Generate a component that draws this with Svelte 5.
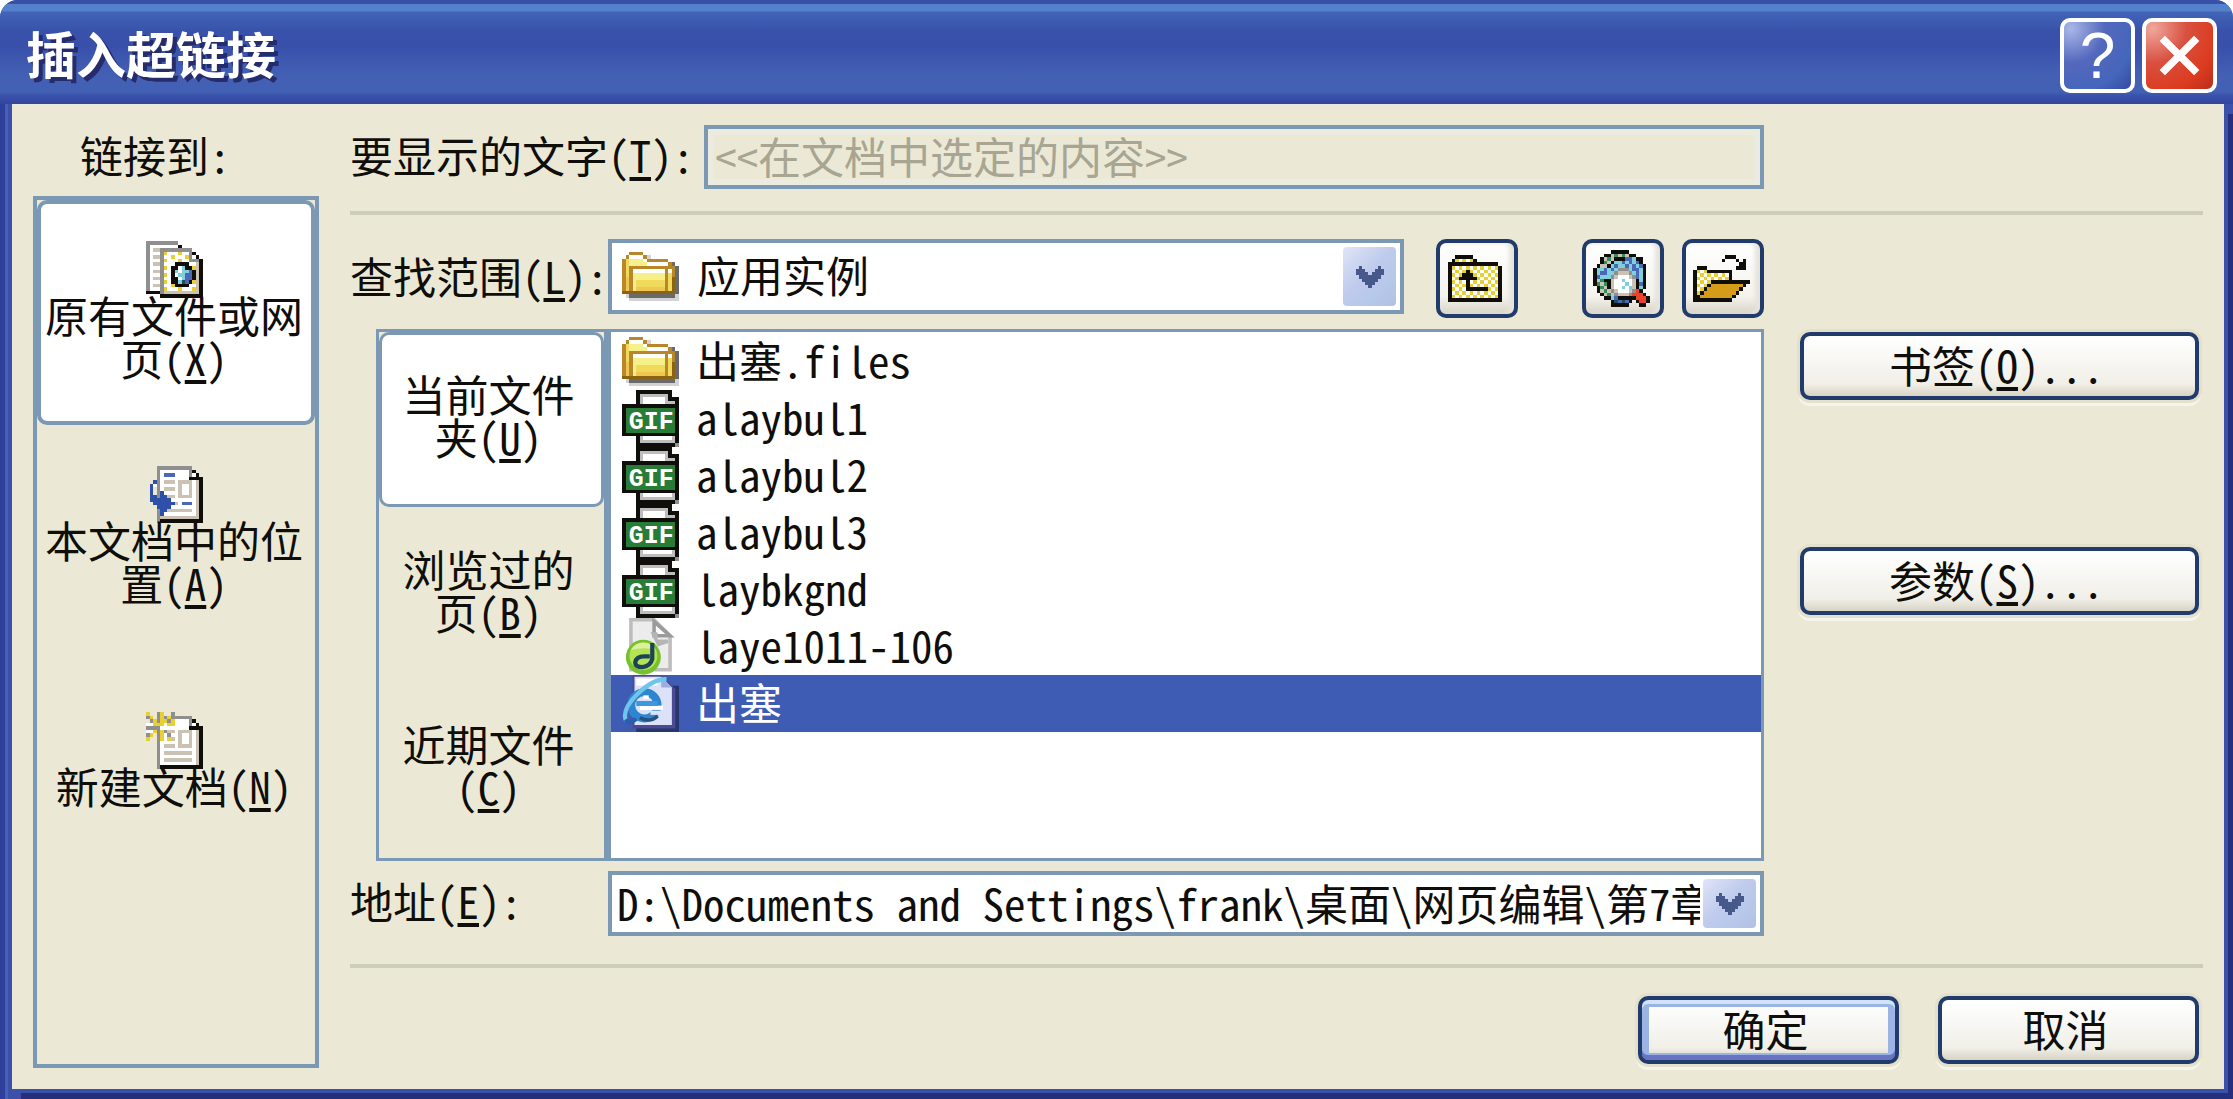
<script lang="ts">
	type Sprite = { rows: string[]; width: number; height: number };

	const palette: Record<string, string> = {
		K: '#0f0e0a',
		G: '#8f8f8f',
		S: '#bdbdbd',
		W: '#ffffff',
		T: '#cbc2b4',
		Y: '#e8cf32',
		O: '#d49c18',
		B: '#4a68b8',
		N: '#2f50a8',
		C: '#7fd0dc',
		D: '#1f4e5a',
		E: '#277d38',
		F: '#2f8f60',
		R: '#ee3f2a',
		A: '#b8872a',
		a: '#8a6410',
		p: '#f6f08a',
		q: '#f1d95c',
		r: '#f0c653',
		s: '#6a6a6a',
		t: '#d3d3d3'
	};

	function sprite(text: string): Sprite {
		const rows = text.trim().split(/\s+/);
		return { rows, width: rows[0].length, height: rows.length };
	}

	const existingIcon = sprite(`
		GGGGGGGGG.......
		GWWWWWWWWK......
		GWTTGGGGGGGGG...
		GWWWGYWWWYWWGK..
		GWTTGWWYWWWYGWK.
		GWWWGYWWWYWWGGGK
		GWTTGWWWKKKKWWTK
		GWWWGYWKKWCKKYTK
		GWTTGWWKCWCCBKTK
		GWWWGYWKWCCBBKTK
		GWTTGWWKKWCBBKTK
		GWWWGYWKKCDBKYTK
		GWTTGWWYKKKKWWTK
		GWWWGYWWWYWWWYTK
		KKKKGTTTTTTTTTTK
		....KKKKKKKKKKKK`);

	const placeIcon = sprite(`
		...GGGGGGGGGG...
		...GWWWWWWWWGK..
		...GWBBBWWWWGWK.
		...GWWWWWWWWKKKK
		..NGWTTTWTTTTWTK
		.NWGWWWWWTWWTWTK
		.N.GWTTTWTWWTWTK
		.N.GNWWWWTWWTWTK
		.NNGNNTTWTTTTWTK
		.NNNNNNWWWWWWWTK
		..NNNNNNTWBBBWTK
		...NNNNWWWWWWWTK
		...GNNTTTTTTTWTK
		...GNWWWWWWWWWTK
		...GTTTTTTTTTTTK
		...GKKKKKKKKKKKK`);

	const newIcon = sprite(`
		Y..GY..G........
		GY.GYGYGGGGGG...
		.GYGYYGYWWWWGK..
		WWYYYWYYWWWWGWK.
		GGGGWWWWWWWWKKKK
		WWYGYGTTWTTTTWTK
		GY.GYWGWWTWWTWTK
		Y..GYWYTWTWWTWTK
		...GWWWWWTWWTWTK
		...GWTTTWTTTTWTK
		...GWWWWWWWWWWTK
		...GWTTTTTTTTWTK
		...GWWWWWWWWWWTK
		...GWTTTTTTTTWTK
		...GWWWWWWWWWWTK
		...GKKKKKKKKKKKK`);

	const upIcon = sprite(`
		..KKKKK........
		.KYWYWYK.......
		KKKKKKKKKKKKKK.
		KYWYWYWYWYWYWYK
		KWYWYKYWYWYWYWK
		KYWYKKKYWYWYWYK
		KWYKKKKKYWYWYWK
		KYWYWKWYWYWYWYK
		KWYWYKYWYWYWYWK
		KYWYWKKKKKKYWYK
		KWYWYWYWYWYWYWK
		KYWYWYWYWYWYWYK
		KKKKKKKKKKKKKKK`);

	const webIcon = sprite(`
		.....KKKKK......
		...KKTFTFTKK....
		..KTFTKKKBBCKK..
		..KFTKCCBCBCBK..
		.KTTKCBCCBCBCBK.
		KCCBCBCGGGCBBCK.
		KCBBCCGTTTGCBCK.
		KBCCCGTWWWTGBCK.
		KTFKKTWWCWWTKCK.
		KFTFKTWWWCWTKBK.
		.KFTKTWWCWCTKCK.
		.KTFTGTWWWTGRK..
		..KTFTGTTTGRRRK.
		...KKCBKKKKKRRRK
		.....KDBDBK.KRRK
		.....KKKKK...KK.`);

	const openIcon = sprite(`
		.........KKK....
		........K...K.K.
		.............KK.
		.KKK........KKK.
		KYWYKKKKKKK.....
		KWYWYWYWYWK.....
		KYWYWYWYWYK.....
		KWYWYKKKKKKKKKKK
		KYWYKOOOOOOOOOK.
		KWYKOOOOOOOOOK..
		KYKOOOOOOOOOK...
		KKOOOOOOOOOK....
		KKKKKKKKKKK.....`);

	const folderIcon = sprite(`
		................
		..AAAA..........
		.AWWWWAt........
		AqppppWAAAAAA...
		AqpppppWWWWWWAs.
		AqAAAAAAAAAAAAAs
		AqAWWWWWWWWWAWAs
		AqApppppppppAqAs
		ArApppppppppAqas
		ArApqqqqqqqqAqas
		ArApqqqqqqqqAqas
		ArAprrrrrrrrAqas
		aaaaaaaaaaaaaaas
		.tssssssssssssst
		..tttttttttttttt
		................`);

	const gifIcon = sprite(`
		....KKKKKKKKKK..
		....KSSSSSSSSK..
		....KSWWWWWWSKKK
		....KSWWWWWWSSSK
		KKKKKKKKKKKKKKKK
		KEEEEEEEEEEEEEEK
		KEEEEEEEEEEEEEEK
		KEEEEEEEEEEEEEEK
		KEEEEEEEEEEEEEEK
		KEEEEEEEEEEEEEEK
		KEEEEEEEEEEEEEEK
		KEEEEEEEEEEEEEEK
		KKKKKKKKKKKKKKKK
		....KSWWWWWWWWSK
		....KSSSSSSSSSSK
		....KKKKKKKKKKKG`);

	const targets = [
		{ id: 'existing', lines: ['原有文件或网', '页'], key: 'X', icon: existingIcon },
		{ id: 'place', lines: ['本文档中的位', '置'], key: 'A', icon: placeIcon },
		{ id: 'new', lines: ['新建文档'], key: 'N', icon: newIcon }
	];

	const views = [
		{ id: 'current', lines: ['当前文件', '夹'], key: 'U' },
		{ id: 'browsed', lines: ['浏览过的', '页'], key: 'B' },
		{ id: 'recent', lines: ['近期文件', ''], key: 'C' }
	];

	const files = [
		{ name: '出塞.files', kind: 'folder' },
		{ name: 'alaybul1', kind: 'gif' },
		{ name: 'alaybul2', kind: 'gif' },
		{ name: 'alaybul3', kind: 'gif' },
		{ name: 'laybkgnd', kind: 'gif' },
		{ name: 'laye1011-106', kind: 'music' },
		{ name: '出塞', kind: 'html' }
	];

	let target = $state('existing');
	let view = $state('current');
	let selected = $state(6);
	let address = $state('D:\\Documents and Settings\\frank\\桌面\\网页编辑\\第7章');
</script>

{#snippet pixels(icon: Sprite)}
	{#each icon.rows as row, y}
		{#each row as cell, x}
			{#if cell !== '.'}
				<rect {x} {y} width="1" height="1" fill={palette[cell]} />
			{/if}
		{/each}
	{/each}
{/snippet}

{#snippet picture(icon: Sprite, size: string)}
	<svg
		class="icon {size}"
		viewBox="0 0 {icon.width} {icon.height}"
		shape-rendering="crispEdges"
		aria-hidden="true"
	>
		{@render pixels(icon)}
	</svg>
{/snippet}

{#snippet accessKey(key: string)}(<u>{key}</u>){/snippet}

{#snippet chevron()}
	<svg class="chevron" viewBox="0 0 9 7" shape-rendering="crispEdges" aria-hidden="true">
		<path d="M0 1h1V0h1v1h1v1h1v1h1V2h1V1h1V0h1v1h1v2H8v1H7v1H6v1H5v1H4V6H3V5H2V4H1V3H0z" fill="#47598a" />
	</svg>
{/snippet}

{#snippet fileIcon(kind: string)}
	{#if kind === 'folder'}
		{@render picture(folderIcon, 'square')}
	{:else if kind === 'gif'}
		<svg class="icon square" viewBox="0 0 16 16" aria-hidden="true">
			<g shape-rendering="crispEdges">{@render pixels(gifIcon)}</g>
			<text class="gif" x="8.2" y="11" text-anchor="middle">GIF</text>
		</svg>
	{:else if kind === 'music'}
		<svg class="icon square" viewBox="0 0 16 16" aria-hidden="true">
			<path d="M2.500 .5H9l4.500 4.500V14.500H2.500z" fill="#ececec" stroke="#bdbdbd" />
			<path d="M9 1v4h4.500z" fill="#fff" stroke="#9b9b9b" />
			<path d="M8 4h2v2h3v1l-3 1z" fill="#b5b5b5" />
			<circle cx="6" cy="11" r="4.900" fill="#76c12c" />
			<circle cx="6" cy="10.700" r="3.900" fill="#b4e455" />
			<path d="M2.500 9a4 4 0 0 1 7 0q-3-1-7 0z" fill="#dcf0a0" />
			<path d="M8.500 7v4.500q-.5 2-2.800 2.300q-2 0-2-1.300q.3-1.700 2.500-1.700h1.600" fill="none" stroke="#1d4456" stroke-width="1.200" />
		</svg>
	{:else}
		<svg class="icon square" viewBox="0 0 16 16" aria-hidden="true">
			<path d="M4 3h12v13H4z" fill="#27376e" />
			<path d="M3 0h8l4 4v11H3z" fill="#4c4a92" />
			<path d="M3.500 .5H11L14 3.500V14H3.500z" fill="#dbe1f6" />
			<path d="M4 1h6v2H4z" fill="#fff" />
			<path d="M11 .5v3h3z" fill="#9dadde" />
			<circle cx="6.300" cy="8.500" r="3.700" fill="none" stroke="#2f86d0" stroke-width="2.200" />
			<path d="M5 9.200h6.500" stroke="#fff" stroke-width="1.200" />
			<path d="M4 8h6" stroke="#3d97dc" stroke-width="1.400" />
			<path d="M8 10h4v1.200H8z" fill="#dbe1f6" />
			<path d="M5 12q3 1.500 5-.5" fill="none" stroke="#245084" stroke-width="1" />
			<path d="M1.200 13q-1.500-3 3-7.500t8.300-4.300" fill="none" stroke="#6fc4ea" stroke-width="1.200" />
			<path d="M1 12.500q1 1.500 3-.2" fill="none" stroke="#2a5fae" stroke-width="1.200" />
			<path d="M6 6.200h1.500" stroke="#fff" stroke-width="1" />
		</svg>
	{/if}
{/snippet}

<div class="dialog" role="dialog" aria-labelledby="dialog-title">
	<header class="titlebar">
		<h1 id="dialog-title">插入超链接</h1>
		<button class="caption help" aria-label="帮助">?</button>
		<button class="caption close" aria-label="关闭">
			<svg viewBox="0 0 40 40" aria-hidden="true">
				<path d="M4 4l32 32M36 4L4 36" stroke="#fff" stroke-width="7" />
			</svg>
		</button>
	</header>

	<div class="body">
		<nav class="side" aria-labelledby="link-to">
			<h2 id="link-to">链接到:</h2>
			<div class="targets">
				{#each targets as item (item.id)}
					<button
						class="target"
						class:active={target === item.id}
						onclick={() => (target = item.id)}
					>
						{@render picture(item.icon, 'square')}
						{#each item.lines as line, i}
							<span>{line}{#if i === item.lines.length - 1}{@render accessKey(item.key)}{/if}</span>
						{/each}
					</button>
				{/each}
			</div>
		</nav>

		<main>
			<div class="row text-row">
				<label class="wide" for="display-text">要显示的文字{@render accessKey('T')}:</label>
				<input id="display-text" value="<<在文档中选定的内容>>" disabled />
			</div>

			<hr />

			<div class="row look-row">
				<label for="look-in">查找范围{@render accessKey('L')}:</label>
				<div class="combo look">
					{@render picture(folderIcon, 'square')}
					<select id="look-in">
						<option>应用实例</option>
					</select>
					<span class="drop">{@render chevron()}</span>
				</div>
				<button class="tool up" aria-label="上一级文件夹">{@render picture(upIcon, 'tool-icon')}</button>
				<button class="tool web" aria-label="浏览 Web">{@render picture(webIcon, 'square')}</button>
				<button class="tool" aria-label="浏览文件">{@render picture(openIcon, 'tool-open')}</button>
			</div>

			<div class="browser">
				<div class="views">
					{#each views as item (item.id)}
						<button class="view" class:active={view === item.id} onclick={() => (view = item.id)}>
							<span>{item.lines[0]}</span>
							<span>{item.lines[1]}{@render accessKey(item.key)}</span>
						</button>
					{/each}
				</div>
				<ul class="files" role="listbox" aria-label="文件">
					{#each files as file, i}
						<li role="option" aria-selected={selected === i}>
							<button class="file" onclick={() => (selected = i)}>
								{@render fileIcon(file.kind)}
								<span>{file.name}</span>
							</button>
						</li>
					{/each}
				</ul>
				<div class="actions">
					<button class="push">书签{@render accessKey('O')}...</button>
					<button class="push">参数{@render accessKey('S')}...</button>
				</div>
			</div>

			<div class="row address-row">
				<label for="address">地址{@render accessKey('E')}:</label>
				<div class="combo">
					<input id="address" bind:value={address} />
					<button class="drop" aria-label="展开地址列表">{@render chevron()}</button>
				</div>
			</div>

			<hr class="lower" />

			<footer>
				<button class="push default">确定</button>
				<button class="push">取消</button>
			</footer>
		</main>
	</div>
</div>

<style>
	:global(body) {
		margin: 0;
		background: #fff;
	}

	.dialog {
		--edge: #7b98b5;
		--face: #ebe9d5;
		--ink: #0f0e0a;
		--navy: #213b6c;
		--aside: 439px;
		box-sizing: border-box;
		min-height: 100vh;
		display: flex;
		flex-direction: column;
		border-radius: 18px 18px 0 0;
		overflow: hidden;
		background: linear-gradient(90deg, #2f409c 0 5px, #4860b8 5px 8px, #3a50a9 8px);
		color: var(--ink);
		font-family: 'Noto Sans Mono CJK SC', 'Noto Sans CJK SC', 'Liberation Mono', monospace;
		font-size: 43px;
		line-height: 43px;
	}

	.dialog * {
		box-sizing: border-box;
	}

	button,
	input,
	select {
		margin: 0;
		padding: 0;
		border: 0;
		background: none;
		color: inherit;
		font: inherit;
		border-radius: 0;
		outline: 0;
	}

	u {
		text-decoration-thickness: 4px;
		text-underline-offset: 4px;
	}

	.icon {
		display: block;
		flex: none;
	}

	.square {
		width: 57px;
		height: 57px;
	}

	.titlebar {
		display: flex;
		align-items: center;
		gap: 7px;
		height: 104px;
		padding: 7px 16px 0 26px;
		background: linear-gradient(
			#3950a8 0 4px,
			#5580cb 4px 11px,
			#4264b8 12px,
			#3851aa 32px,
			#3850aa 46px,
			#4460b5 76px,
			#4260b4 92px,
			#3a50a9 96px,
			#3144a0 104px
		);
	}

	h1 {
		flex: 1;
		margin: 0;
		padding-bottom: 8px;
		color: #fff;
		font-size: 50px;
		line-height: 50px;
		font-weight: 700;
		text-shadow: 4px 4px 0 #262c6b;
	}

	.caption {
		display: flex;
		align-items: center;
		justify-content: center;
		width: 75px;
		height: 75px;
		border: 4px solid #fff;
		border-radius: 10px;
		color: #fff;
	}

	.help {
		background: radial-gradient(circle at 10% 10%, #a9b7e6, #5468bd 40%, #4466bb 75%, #3449a2);
		font: 64px/64px 'Liberation Sans', sans-serif;
	}

	.close {
		background: radial-gradient(circle at 10% 10%, #f0a79c, #d8503f 40%, #dc3b1e 75%, #b82e1e);
	}

	.close svg {
		width: 43px;
		height: 43px;
	}

	.body {
		flex: 1;
		display: flex;
		gap: 31px;
		margin: 0 9px 10px 12px;
		padding: 21px;
		background: var(--face);
		box-shadow:
			4px 4px 0 #3a50a9,
			9px 10px 0 #262f7c;
	}

	.side {
		flex: none;
		width: 286px;
		display: flex;
		flex-direction: column;
		gap: 7px;
	}

	h2 {
		margin: 0;
		padding-left: 47px;
		font-size: 43px;
		line-height: 58px;
		height: 64px;
		font-weight: 400;
	}

	.targets {
		flex: 1;
		display: flex;
		flex-direction: column;
		border: 4px solid var(--edge);
	}

	.target {
		display: flex;
		flex-direction: column;
		align-items: center;
		justify-content: center;
		height: 225px;
		padding: 0 4px 6px 0;
		border: 4px solid transparent;
	}

	.target .icon {
		margin-bottom: -5px;
	}

	.target span,
	.view span {
		white-space: nowrap;
	}

	.target.active,
	.view.active {
		background: #fff;
		border-color: var(--edge);
		border-radius: 10px;
	}

	main {
		flex: 1;
		min-width: 0;
		display: flex;
		flex-direction: column;
	}

	.row {
		display: flex;
		padding-right: var(--aside);
	}

	label {
		flex: none;
		width: 258px;
		white-space: nowrap;
	}

	.wide {
		width: 354px;
	}

	.text-row {
		height: 64px;
		line-height: 58px;
	}

	.text-row input {
		flex: 1;
		min-width: 0;
		padding: 0 7px 4px;
		border: 4px solid var(--edge);
		background: var(--face);
		color: #a8a593;
		box-shadow: inset 0 0 0 6px #ebebdf;
	}

	hr {
		width: 100%;
		height: 4px;
		margin: 22px 0 24px;
		border: 0;
		background: #cdceb8;
	}

	.look-row {
		height: 79px;
		line-height: 73px;
	}

	.combo {
		position: relative;
		flex: 1;
		min-width: 0;
		display: flex;
		align-items: center;
		gap: 18px;
		padding: 4px;
		border: 4px solid var(--edge);
		background: #fff;
	}

	.look {
		height: 75px;
		margin-right: 32px;
		padding-left: 10px;
	}

	.look select {
		flex: 1;
		min-width: 0;
		height: 60px;
		padding-bottom: 6px;
		line-height: 54px;
		appearance: none;
	}

	.drop {
		flex: none;
		display: flex;
		align-items: center;
		justify-content: center;
		width: 53px;
		height: 100%;
		border-radius: 4px;
		background: linear-gradient(135deg, #dfe5f8, #c0cbec 45%, #b5c8ea 75%, #b3bfe2);
	}

	.look .drop {
		pointer-events: none;
	}

	.chevron {
		width: 32px;
		height: 22px;
	}

	.tool {
		display: flex;
		align-items: center;
		justify-content: center;
		width: 82px;
		height: 79px;
		padding-right: 4px;
		border: 4px solid var(--navy);
		border-radius: 10px;
		background: linear-gradient(#fff, #f4f3ee 75%, #d8d3c6);
		box-shadow: inset -5px 0 4px #e6e3da;
	}

	.up {
		margin-right: 64px;
	}

	.web {
		margin-right: 18px;
	}

	.tool-icon {
		width: 54px;
		height: 47px;
	}

	.tool-open {
		width: 57px;
		height: 47px;
	}

	.browser {
		display: flex;
		height: 532px;
		margin: 11px 0 10px 26px;
	}

	.views {
		flex: none;
		width: 232px;
		display: flex;
		flex-direction: column;
		border: 3px solid var(--edge);
		border-right-width: 4px;
	}

	.view {
		display: flex;
		flex-direction: column;
		align-items: center;
		justify-content: center;
		height: 175px;
		padding: 0 6px 10px 0;
		border: 3px solid transparent;
	}

	.files {
		flex: 1;
		min-width: 0;
		margin: 0;
		padding: 1px 0 0;
		border: 3px solid var(--edge);
		background: #fff;
		list-style: none;
	}

	.file {
		display: flex;
		align-items: center;
		gap: 17px;
		width: 100%;
		height: 57px;
		padding-left: 11px;
		line-height: 57px;
	}

	.file span {
		padding-bottom: 4px;
	}

	[aria-selected='true'] .file {
		background: #3e5cb4;
		color: #fff;
	}

	.gif {
		fill: #fff;
		font: 700 7px 'Liberation Mono', monospace;
	}

	.actions {
		flex: none;
		display: flex;
		flex-direction: column;
		gap: 147px;
		width: var(--aside);
		padding: 3px 4px 0 36px;
	}

	.push {
		height: 68px;
		padding: 0 6px 4px 0;
		border: 4px solid var(--navy);
		border-radius: 10px;
		background: linear-gradient(#fff, #f0efe8 80%, #d8d3c3);
		box-shadow:
			0 0 0 3px #e3e0cb,
			0 4px 0 2px #f6f5ec;
	}

	.default {
		box-shadow:
			inset 0 4px 0 #cfe3fa,
			inset 0 -5px 0 #6675c2,
			inset 0 0 0 7px #9cb4e4,
			0 0 0 3px #e3e0cb,
			0 4px 0 2px #f6f5ec;
	}

	.address-row {
		height: 65px;
		line-height: 59px;
	}

	.combo input {
		flex: 1;
		min-width: 0;
		height: 57px;
		padding: 0 0 4px 1px;
		line-height: 53px;
	}

	.address-row .combo {
		gap: 3px;
	}

	.lower {
		margin: 28px 0;
	}

	footer {
		display: flex;
		justify-content: flex-end;
		gap: 39px;
		padding-right: 4px;
	}

	footer .push {
		width: 261px;
	}
</style>
